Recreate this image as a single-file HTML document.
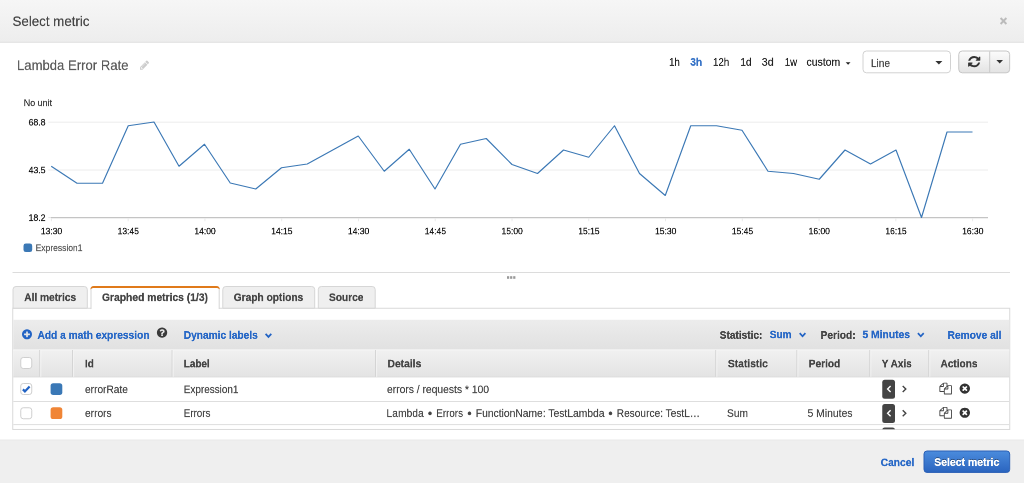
<!DOCTYPE html>
<html lang="en">
<head>
<meta charset="utf-8">
<title>Select metric</title>
<style>
html,body{margin:0;padding:0;}
body{width:1024px;height:483px;overflow:hidden;background:#fff;position:relative;font-family:"Liberation Sans", Arial, Helvetica, sans-serif;}
.a{position:absolute;box-sizing:border-box;}
.t{position:absolute;left:0;top:0;white-space:pre;line-height:32px;height:32px;will-change:transform;transform-origin:0 0;}
svg{position:absolute;left:0;top:0;overflow:visible;}
</style>
</head>
<body>
<svg width="1024" height="483" viewBox="0 0 1024 483">
  <defs>
    <linearGradient id="gHead" x1="0" y1="0" x2="0" y2="1"><stop offset="0" stop-color="#f6f6f6"/><stop offset="1" stop-color="#ededed"/></linearGradient>
    <linearGradient id="gBtn" x1="0" y1="0" x2="0" y2="1"><stop offset="0" stop-color="#fcfcfc"/><stop offset="1" stop-color="#e3e3e3"/></linearGradient>
    <linearGradient id="gTool" x1="0" y1="0" x2="0" y2="1"><stop offset="0" stop-color="#ececec"/><stop offset="1" stop-color="#e1e1e1"/></linearGradient>
    <linearGradient id="gTh" x1="0" y1="0" x2="0" y2="1"><stop offset="0" stop-color="#f1f1f1"/><stop offset="1" stop-color="#e3e3e3"/></linearGradient>
    <linearGradient id="gBlue" x1="0" y1="0" x2="0" y2="1"><stop offset="0" stop-color="#4b8cdd"/><stop offset="1" stop-color="#2a64bf"/></linearGradient>
    <clipPath id="cBox"><rect x="13" y="308.5" width="996.5" height="120.7"/></clipPath>
  </defs>

  <!-- modal header -->
  <rect x="0" y="0" width="1024" height="42" fill="url(#gHead)"/>
  <rect x="0" y="41.8" width="1024" height="1" fill="#e0e0e0"/>
  <!-- modal footer -->
  <rect x="0" y="439.8" width="1024" height="44" fill="#efefef"/>
  <rect x="0" y="439.6" width="1024" height="1" fill="#e9e9e9"/>

  <!-- chart type select -->
  <rect x="863" y="51" width="87.5" height="21.8" rx="3.5" fill="#fff" stroke="#d2d2d2" stroke-width="1"/>
  <!-- refresh button group -->
  <rect x="958.75" y="51" width="50.9" height="21.8" rx="3.5" fill="url(#gBtn)" stroke="#c6c6c6" stroke-width="1"/>
  <line x1="989.7" y1="51.3" x2="989.7" y2="72.5" stroke="#c9c9c9" stroke-width="1"/>

  <!-- chart -->
  <line x1="48.3" y1="122.2" x2="988" y2="122.2" stroke="#ececec" stroke-width="1"/>
  <line x1="48.3" y1="170" x2="988" y2="170" stroke="#ececec" stroke-width="1"/>
  <line x1="48.3" y1="217.6" x2="51" y2="217.6" stroke="#e4e4e4" stroke-width="1"/>
  <line x1="51" y1="217.6" x2="988" y2="217.6" stroke="#c4c4c4" stroke-width="1.1"/>
  <line x1="51.40" y1="218" x2="51.40" y2="221.3" stroke="#eaeaea" stroke-width="1"/><line x1="128.17" y1="218" x2="128.17" y2="221.3" stroke="#eaeaea" stroke-width="1"/><line x1="204.93" y1="218" x2="204.93" y2="221.3" stroke="#eaeaea" stroke-width="1"/><line x1="281.70" y1="218" x2="281.70" y2="221.3" stroke="#eaeaea" stroke-width="1"/><line x1="358.47" y1="218" x2="358.47" y2="221.3" stroke="#eaeaea" stroke-width="1"/><line x1="435.23" y1="218" x2="435.23" y2="221.3" stroke="#eaeaea" stroke-width="1"/><line x1="512.00" y1="218" x2="512.00" y2="221.3" stroke="#eaeaea" stroke-width="1"/><line x1="588.77" y1="218" x2="588.77" y2="221.3" stroke="#eaeaea" stroke-width="1"/><line x1="665.53" y1="218" x2="665.53" y2="221.3" stroke="#eaeaea" stroke-width="1"/><line x1="742.30" y1="218" x2="742.30" y2="221.3" stroke="#eaeaea" stroke-width="1"/><line x1="819.07" y1="218" x2="819.07" y2="221.3" stroke="#eaeaea" stroke-width="1"/><line x1="895.83" y1="218" x2="895.83" y2="221.3" stroke="#eaeaea" stroke-width="1"/><line x1="972.60" y1="218" x2="972.60" y2="221.3" stroke="#eaeaea" stroke-width="1"/>
  <polyline points="51.25,166.25 77.00,183.25 102.50,183.25 128.25,125.75 154.00,122.00 179.00,166.25 204.50,144.25 230.25,183.00 255.75,189.00 281.50,167.75 307.25,164.00 358.25,136.00 384.25,171.25 409.25,149.25 435.00,189.00 460.50,144.25 486.25,138.50 512.00,164.50 537.50,173.50 563.50,150.00 588.75,157.25 614.50,125.75 639.50,173.50 665.25,195.50 690.75,125.75 716.50,125.75 742.00,130.25 768.00,171.25 793.50,173.50 819.25,179.25 845.00,150.00 870.50,164.00 896.00,150.00 921.50,217.50 947.00,132.00 972.50,132.00" fill="none" stroke="#3b78b5" stroke-width="1.15" stroke-linejoin="round"/>
  <rect x="23.5" y="243.4" width="8.7" height="8.7" rx="2.3" fill="#3b78b5"/>

  <!-- splitter -->
  <rect x="12.5" y="272" width="997.5" height="1" fill="#dcdcdc"/>
  <rect x="507" y="276.2" width="2.2" height="2.6" fill="#999"/><rect x="510.1" y="276.2" width="2.2" height="2.6" fill="#999"/><rect x="513.2" y="276.2" width="2.2" height="2.6" fill="#999"/>

  <!-- tab panel -->
  <rect x="12.75" y="308.25" width="997" height="121.2" fill="#fff" stroke="#d9d9d9" stroke-width="1"/>
  <!-- tabs -->
  <path d="M13 308.2V289.5a3 3 0 0 1 3-3H84.3a3 3 0 0 1 3 3V308.2z" fill="#efefef" stroke="#d6d6d6" stroke-width="1"/>
  <path d="M222.8 308.2V289.5a3 3 0 0 1 3-3H311.7a3 3 0 0 1 3 3V308.2z" fill="#efefef" stroke="#d6d6d6" stroke-width="1"/>
  <path d="M318.3 308.2V289.5a3 3 0 0 1 3-3H372.2a3 3 0 0 1 3 3V308.2z" fill="#efefef" stroke="#d6d6d6" stroke-width="1"/>
  <path d="M91 309V289.5a3 3 0 0 1 3-3H216.2a3 3 0 0 1 3 3V309z" fill="#fff"/>
  <path d="M91 309V289.5a3 3 0 0 1 3-3H216.2a3 3 0 0 1 3 3V309" fill="none" stroke="#d6d6d6" stroke-width="1"/>
  <path d="M90.5 289.6a3.4 3.4 0 0 1 3.4-3.6H216.3a3.4 3.4 0 0 1 3.4 3.6 3 3 0 0 0-3-1.6H93.5a3 3 0 0 0-3 1.6z" fill="#e07a1a"/>

  <!-- toolbar + table header -->
  <rect x="13.25" y="319.8" width="996" height="30" fill="url(#gTool)"/>
  <rect x="13.25" y="349.7" width="996" height="27.3" fill="url(#gTh)"/>
  <rect x="13.25" y="349.6" width="996" height="0.8" fill="#f7f7f7"/>
  <rect x="13.25" y="376.6" width="996" height="0.8" fill="#dadada"/>
  <rect x="13.25" y="401" width="996" height="1" fill="#dedede"/>
  <rect x="13.25" y="424.1" width="996" height="1" fill="#dedede"/>
  <g>
    <rect x="39.25" y="350" width="1" height="26.8" fill="#d2d2d2"/><rect x="40.25" y="350" width="1" height="26.8" fill="#f6f6f6" opacity=".8"/><rect x="72.10" y="350" width="1" height="26.8" fill="#d2d2d2"/><rect x="73.10" y="350" width="1" height="26.8" fill="#f6f6f6" opacity=".8"/><rect x="171.60" y="350" width="1" height="26.8" fill="#d2d2d2"/><rect x="172.60" y="350" width="1" height="26.8" fill="#f6f6f6" opacity=".8"/><rect x="375.10" y="350" width="1" height="26.8" fill="#d2d2d2"/><rect x="376.10" y="350" width="1" height="26.8" fill="#f6f6f6" opacity=".8"/><rect x="715.30" y="350" width="1" height="26.8" fill="#d2d2d2"/><rect x="716.30" y="350" width="1" height="26.8" fill="#f6f6f6" opacity=".8"/><rect x="796.40" y="350" width="1" height="26.8" fill="#d2d2d2"/><rect x="797.40" y="350" width="1" height="26.8" fill="#f6f6f6" opacity=".8"/><rect x="869.30" y="350" width="1" height="26.8" fill="#d2d2d2"/><rect x="870.30" y="350" width="1" height="26.8" fill="#f6f6f6" opacity=".8"/><rect x="928.30" y="350" width="1" height="26.8" fill="#d2d2d2"/><rect x="929.30" y="350" width="1" height="26.8" fill="#f6f6f6" opacity=".8"/>
  </g>

  <!-- primary button -->
  <rect x="924" y="451" width="85.7" height="21.4" rx="3" fill="url(#gBlue)" stroke="#2b60b6" stroke-width="1"/>

  <g clip-path="url(#cBox)">
<rect x="20.75" y="383.50" width="11" height="11" rx="2.5" fill="#fff" stroke="#cfcfcf" stroke-width="1"/><path d="M22.9 389.40 L24.9 391.40 L29.6 386.40" stroke="#2263c4" stroke-width="2.2" fill="none" stroke-linejoin="miter"/>
<rect x="20.75" y="407.75" width="11" height="11" rx="2.5" fill="#fff" stroke="#cfcfcf" stroke-width="1"/>
<rect x="50.6" y="383.2" width="11.7" height="11.7" rx="2.6" fill="#3a78b6"/>
<rect x="50.6" y="407.3" width="11.7" height="11.7" rx="2.6" fill="#f08536"/>
<rect x="882.25" y="379.75" width="12.75" height="19" rx="2.5" fill="#444"/>
<path d="M890.6 385.95 L887.6 388.95 L890.6 391.95" stroke="#fff" stroke-width="1.4" fill="none"/>
<path d="M902.7 385.95 L905.8 388.95 L902.7 391.95" stroke="#444" stroke-width="1.4" fill="none"/>
<path transform="translate(939.400 382.750) scale(0.00698 0.00653) translate(0 0)" fill="#444" d="M1696 384q40 0 68 28t28 68v1216q0 40-28 68t-68 28h-960q-40 0-68-28t-28-68v-288h-544q-40 0-68-28t-28-68v-672q0-40 20-88t48-76l408-408q28-28 76-48t88-20h416q40 0 68 28t28 68v328q68-40 128-40h416zm-544 213l-299 299h299v-299zm-640-384l-299 299h299v-299zm196 647l316-316v-416h-384v416q0 40-28 68t-68 28h-416v640h512v-256q0-40 20-88t48-76zm956 804v-1152h-384v416q0 40-28 68t-68 28h-416v640h896z"/>
<path transform="translate(959.600 383.450) scale(0.00677 0.00664) translate(-128 -128)" fill="#333" d="M1277 1122q0-26-19-45l-181-181 181-181q19-19 19-45 0-27-19-46l-90-90q-19-19-46-19-26 0-45 19l-181 181-181-181q-19-19-45-19-27 0-46 19l-90 90q-19 19-19 46 0 26 19 45l181 181-181 181q-19 19-19 45 0 27 19 46l90 90q19 19 46 19 26 0 45-19l181-181 181 181q19 19 45 19 27 0 46-19l90-90q19-19 19-46zm387-226q0 209-103 385.500t-279.500 279.500-385.500 103-385.500-103-279.500-279.500-103-385.500 103-385.500 279.500-279.500 385.500-103 385.500 103 279.500 279.500 103 385.500z"/>
<rect x="882.25" y="403.95" width="12.75" height="19" rx="2.5" fill="#444"/>
<path d="M890.6 410.15 L887.6 413.15 L890.6 416.15" stroke="#fff" stroke-width="1.4" fill="none"/>
<path d="M902.7 410.15 L905.8 413.15 L902.7 416.15" stroke="#444" stroke-width="1.4" fill="none"/>
<path transform="translate(939.400 406.950) scale(0.00698 0.00653) translate(0 0)" fill="#444" d="M1696 384q40 0 68 28t28 68v1216q0 40-28 68t-68 28h-960q-40 0-68-28t-28-68v-288h-544q-40 0-68-28t-28-68v-672q0-40 20-88t48-76l408-408q28-28 76-48t88-20h416q40 0 68 28t28 68v328q68-40 128-40h416zm-544 213l-299 299h299v-299zm-640-384l-299 299h299v-299zm196 647l316-316v-416h-384v416q0 40-28 68t-68 28h-416v640h512v-256q0-40 20-88t48-76zm956 804v-1152h-384v416q0 40-28 68t-68 28h-416v640h896z"/>
<path transform="translate(959.600 407.650) scale(0.00677 0.00664) translate(-128 -128)" fill="#333" d="M1277 1122q0-26-19-45l-181-181 181-181q19-19 19-45 0-27-19-46l-90-90q-19-19-46-19-26 0-45 19l-181 181-181-181q-19-19-45-19-27 0-46 19l-90 90q-19 19-19 46 0 26 19 45l181 181-181 181q-19 19-19 45 0 27 19 46l90 90q19 19 46 19 26 0 45-19l181-181 181 181q19 19 45 19 27 0 46-19l90-90q19-19 19-46zm387-226q0 209-103 385.500t-279.500 279.500-385.500 103-385.500-103-279.500-279.500-103-385.500 103-385.500 279.500-279.500 385.500-103 385.500 103 279.500 279.500 103 385.500z"/>
<rect x="882.25" y="427.40" width="12.75" height="19" rx="2.5" fill="#444"/>
<path d="M890.6 433.60 L887.6 436.60 L890.6 439.60" stroke="#fff" stroke-width="1.4" fill="none"/>
<path d="M902.7 433.60 L905.8 436.60 L902.7 439.60" stroke="#444" stroke-width="1.4" fill="none"/>
<path transform="translate(939.400 430.400) scale(0.00698 0.00653) translate(0 0)" fill="#444" d="M1696 384q40 0 68 28t28 68v1216q0 40-28 68t-68 28h-960q-40 0-68-28t-28-68v-288h-544q-40 0-68-28t-28-68v-672q0-40 20-88t48-76l408-408q28-28 76-48t88-20h416q40 0 68 28t28 68v328q68-40 128-40h416zm-544 213l-299 299h299v-299zm-640-384l-299 299h299v-299zm196 647l316-316v-416h-384v416q0 40-28 68t-68 28h-416v640h512v-256q0-40 20-88t48-76zm956 804v-1152h-384v416q0 40-28 68t-68 28h-416v640h896z"/>
<path transform="translate(959.600 431.100) scale(0.00677 0.00664) translate(-128 -128)" fill="#333" d="M1277 1122q0-26-19-45l-181-181 181-181q19-19 19-45 0-27-19-46l-90-90q-19-19-46-19-26 0-45 19l-181 181-181-181q-19-19-45-19-27 0-46 19l-90 90q-19 19-19 46 0 26 19 45l181 181-181 181q-19 19-19 45 0 27 19 46l90 90q19 19 46 19 26 0 45-19l181-181 181 181q19 19 45 19 27 0 46-19l90-90q19-19 19-46zm387-226q0 209-103 385.500t-279.500 279.500-385.500 103-385.500-103-279.500-279.500-103-385.500 103-385.500 279.500-279.500 385.500-103 385.500 103 279.500 279.500 103 385.500z"/>
  </g>
<path d="M1000.6 18 L1006.4 24 M1006.4 18 L1000.6 24" stroke="#bbb" stroke-width="1.9" fill="none"/>
<path transform="translate(140.000 60.600) scale(0.00594 0.00603) translate(-128 -154)" fill="#ccc" d="M491 1536l91-91-235-235-91 91v107h128v128h107zm523-928q0-22-22-22-10 0-17 7l-542 542q-7 7-7 17 0 22 22 22 10 0 17-7l542-542q7-7 7-17zm-54-192l416 416-832 832h-416v-416zm683 96q0 53-37 90l-166 166-416-416 166-165q36-38 90-38 53 0 91 38l235 234q37 39 37 91z"/>
<path d="M845.7 62.2h4.8l-2.4 2.5z" fill="#222"/>
<path d="M935.4 60.9h7l-3.5 3.6z" fill="#333"/>
<path d="M996.4 60h6.6l-3.3 3.4z" fill="#333"/>
<path transform="translate(968.100 56.100) scale(0.00794 0.00723) translate(-128 -128)" fill="#333" d="M1639 1056q0 5-1 7-64 268-268 434.500t-478 166.500q-146 0-282.500-55t-243.500-157l-129 129q-19 19-45 19t-45-19-19-45v-448q0-26 19-45t45-19h448q26 0 45 19t19 45-19 45l-137 137q71 66 161 102t187 36q134 0 250-65t186-179q11-17 53-117 8-23 30-23h192q13 0 22.500 9.500t9.500 22.500zm25-800v448q0 26-19 45t-45 19h-448q-26 0-45-19t-19-45 19-45l138-138q-148-137-349-137-134 0-250 65t-186 179q-11 17-53 117-8 23-30 23h-199q-13 0-22.500-9.500t-9.500-22.500v-7q65-268 270-434.500t480-166.500q146 0 284 55.500t245 156.500l130-129q19-19 45-19t45 19 19 45z"/>
<path transform="translate(22.000 329.300) scale(0.00651 0.00651) translate(-128 -128)" fill="#2263c4" d="M1344 960v-128q0-26-19-45t-45-19h-256v-256q0-26-19-45t-45-19h-128q-26 0-45 19t-19 45v256h-256q-26 0-45 19t-19 45v128q0 26 19 45t45 19h256v256q0 26 19 45t45 19h128q26 0 45-19t19-45v-256h256q26 0 45-19t19-45zm320-64q0 209-103 385.500t-279.500 279.500-385.500 103-385.500-103-279.500-279.500-103-385.500 103-385.500 279.500-279.500 385.500-103 385.500 103 279.500 279.500 103 385.500z"/>
<path transform="translate(156.900 327.500) scale(0.00671 0.00671) translate(-128 -128)" fill="#3a3a3a" d="M1024 1376v-192q0-14-9-23t-23-9h-192q-14 0-23 9t-9 23v192q0 14 9 23t23 9h192q14 0 23-9t9-23zm256-672q0-88-55.500-163t-138.500-116-170-41q-243 0-371 213-15 24 8 42l132 100q7 6 19 6 16 0 25-12 53-68 86-92 34-24 86-24 48 0 85.500 26t37.500 59q0 38-20 61t-68 45q-63 28-115.500 86.500t-52.500 125.500v36q0 14 9 23t23 9h192q14 0 23-9t9-23q0-19 21.500-49.500t54.500-49.500q32-18 49-28.500t46-35 44.500-48 28-60.500 12.500-81zm384 192q0 209-103 385.500t-279.500 279.500-385.500 103-385.500-103-279.500-279.500-103-385.500 103-385.500 279.500-279.500 385.500-103 385.500 103 279.500 279.500 103 385.500z"/>
<path d="M265.60 333.80 L268.45 336.90 L271.30 333.80" stroke="#2263c4" stroke-width="1.7" fill="none" stroke-linejoin="miter"/>
<path d="M799.70 333.20 L802.55 336.30 L805.40 333.20" stroke="#2263c4" stroke-width="1.7" fill="none" stroke-linejoin="miter"/>
<path d="M917.90 333.20 L920.80 336.30 L923.70 333.20" stroke="#2263c4" stroke-width="1.7" fill="none" stroke-linejoin="miter"/>
<rect x="20.75" y="357.50" width="11" height="11" rx="2.5" fill="#fff" stroke="#cfcfcf" stroke-width="1"/>
</svg>
<div class="t" style="transform:translate(12.50px,13.50px) rotate(0.001deg) scale(0.4758,0.5);font-size:28px;font-weight:400;color:#444;-webkit-text-stroke:0.40px #444;">Select metric</div>
<div class="t" style="transform:translate(17.00px,57.50px) rotate(0.001deg) scale(0.4683,0.5);font-size:28px;font-weight:400;color:#5a5a5a;-webkit-text-stroke:0.40px #5a5a5a;">Lambda Error Rate</div>
<div class="t" style="transform:translate(669.10px,54.20px) rotate(0.001deg) scale(0.4411,0.5);font-size:22px;font-weight:400;color:#222;-webkit-text-stroke:0.34px #222;">1h</div>
<div class="t" style="transform:translate(690.30px,54.20px) rotate(0.001deg) scale(0.4594,0.5);font-size:22px;font-weight:700;color:#3572c6;-webkit-text-stroke:0.50px #3572c6;">3h</div>
<div class="t" style="transform:translate(713.00px,54.20px) rotate(0.001deg) scale(0.4412,0.5);font-size:22px;font-weight:400;color:#222;-webkit-text-stroke:0.34px #222;">12h</div>
<div class="t" style="transform:translate(740.40px,54.20px) rotate(0.001deg) scale(0.4534,0.5);font-size:22px;font-weight:400;color:#222;-webkit-text-stroke:0.34px #222;">1d</div>
<div class="t" style="transform:translate(761.70px,54.20px) rotate(0.001deg) scale(0.4901,0.5);font-size:22px;font-weight:400;color:#222;-webkit-text-stroke:0.34px #222;">3d</div>
<div class="t" style="transform:translate(784.75px,54.20px) rotate(0.001deg) scale(0.4391,0.5);font-size:22px;font-weight:400;color:#222;-webkit-text-stroke:0.34px #222;">1w</div>
<div class="t" style="transform:translate(806.50px,54.20px) rotate(0.001deg) scale(0.4759,0.5);font-size:22px;font-weight:400;color:#222;-webkit-text-stroke:0.34px #222;">custom</div>
<div class="t" style="transform:translate(870.90px,55.40px) rotate(0.001deg) scale(0.4616,0.5);font-size:22px;font-weight:400;color:#444;-webkit-text-stroke:0.34px #444;">Line</div>
<div class="t" style="transform:translate(23.75px,95.00px) rotate(0.001deg) scale(0.4952,0.5);font-size:18px;font-weight:400;color:#333;-webkit-text-stroke:0.40px #333;">No unit</div>
<div class="t" style="transform:translate(28.60px,114.50px) rotate(0.001deg) scale(0.4822,0.5);font-size:18px;font-weight:400;color:#111;-webkit-text-stroke:0.40px #111;">68.8</div>
<div class="t" style="transform:translate(28.60px,162.30px) rotate(0.001deg) scale(0.4822,0.5);font-size:18px;font-weight:400;color:#111;-webkit-text-stroke:0.40px #111;">43.5</div>
<div class="t" style="transform:translate(28.60px,209.90px) rotate(0.001deg) scale(0.4822,0.5);font-size:18px;font-weight:400;color:#111;-webkit-text-stroke:0.40px #111;">18.2</div>
<div class="t" style="transform:translate(40.85px,223.30px) rotate(0.001deg) scale(0.4728,0.5);font-size:18px;font-weight:400;color:#111;-webkit-text-stroke:0.40px #111;">13:30</div>
<div class="t" style="transform:translate(117.62px,223.30px) rotate(0.001deg) scale(0.4728,0.5);font-size:18px;font-weight:400;color:#111;-webkit-text-stroke:0.40px #111;">13:45</div>
<div class="t" style="transform:translate(194.40px,223.30px) rotate(0.001deg) scale(0.4728,0.5);font-size:18px;font-weight:400;color:#111;-webkit-text-stroke:0.40px #111;">14:00</div>
<div class="t" style="transform:translate(271.17px,223.30px) rotate(0.001deg) scale(0.4728,0.5);font-size:18px;font-weight:400;color:#111;-webkit-text-stroke:0.40px #111;">14:15</div>
<div class="t" style="transform:translate(347.95px,223.30px) rotate(0.001deg) scale(0.4728,0.5);font-size:18px;font-weight:400;color:#111;-webkit-text-stroke:0.40px #111;">14:30</div>
<div class="t" style="transform:translate(424.73px,223.30px) rotate(0.001deg) scale(0.4728,0.5);font-size:18px;font-weight:400;color:#111;-webkit-text-stroke:0.40px #111;">14:45</div>
<div class="t" style="transform:translate(501.50px,223.30px) rotate(0.001deg) scale(0.4728,0.5);font-size:18px;font-weight:400;color:#111;-webkit-text-stroke:0.40px #111;">15:00</div>
<div class="t" style="transform:translate(578.27px,223.30px) rotate(0.001deg) scale(0.4728,0.5);font-size:18px;font-weight:400;color:#111;-webkit-text-stroke:0.40px #111;">15:15</div>
<div class="t" style="transform:translate(655.05px,223.30px) rotate(0.001deg) scale(0.4728,0.5);font-size:18px;font-weight:400;color:#111;-webkit-text-stroke:0.40px #111;">15:30</div>
<div class="t" style="transform:translate(731.82px,223.30px) rotate(0.001deg) scale(0.4728,0.5);font-size:18px;font-weight:400;color:#111;-webkit-text-stroke:0.40px #111;">15:45</div>
<div class="t" style="transform:translate(808.60px,223.30px) rotate(0.001deg) scale(0.4728,0.5);font-size:18px;font-weight:400;color:#111;-webkit-text-stroke:0.40px #111;">16:00</div>
<div class="t" style="transform:translate(885.38px,223.30px) rotate(0.001deg) scale(0.4728,0.5);font-size:18px;font-weight:400;color:#111;-webkit-text-stroke:0.40px #111;">16:15</div>
<div class="t" style="transform:translate(962.15px,223.30px) rotate(0.001deg) scale(0.4728,0.5);font-size:18px;font-weight:400;color:#111;-webkit-text-stroke:0.40px #111;">16:30</div>
<div class="t" style="transform:translate(35.60px,240.00px) rotate(0.001deg) scale(0.4734,0.5);font-size:18px;font-weight:400;color:#555;-webkit-text-stroke:0.40px #555;">Expression1</div>
<div class="t" style="transform:translate(24.25px,289.50px) rotate(0.001deg) scale(0.4613,0.5);font-size:22px;font-weight:700;color:#444;-webkit-text-stroke:0.50px #444;">All metrics</div>
<div class="t" style="transform:translate(102.00px,289.50px) rotate(0.001deg) scale(0.4686,0.5);font-size:22px;font-weight:700;color:#444;-webkit-text-stroke:0.50px #444;">Graphed metrics (1/3)</div>
<div class="t" style="transform:translate(233.75px,289.50px) rotate(0.001deg) scale(0.4623,0.5);font-size:22px;font-weight:700;color:#444;-webkit-text-stroke:0.50px #444;">Graph options</div>
<div class="t" style="transform:translate(329.00px,289.50px) rotate(0.001deg) scale(0.4625,0.5);font-size:22px;font-weight:700;color:#444;-webkit-text-stroke:0.50px #444;">Source</div>
<div class="t" style="transform:translate(37.50px,327.25px) rotate(0.001deg) scale(0.4627,0.5);font-size:22px;font-weight:700;color:#2667c6;-webkit-text-stroke:0.50px #2667c6;">Add a math expression</div>
<div class="t" style="transform:translate(183.75px,327.25px) rotate(0.001deg) scale(0.4620,0.5);font-size:22px;font-weight:700;color:#2667c6;-webkit-text-stroke:0.50px #2667c6;">Dynamic labels</div>
<div class="t" style="transform:translate(719.75px,327.25px) rotate(0.001deg) scale(0.4590,0.5);font-size:22px;font-weight:700;color:#444;-webkit-text-stroke:0.50px #444;">Statistic:</div>
<div class="t" style="transform:translate(769.75px,326.70px) rotate(0.001deg) scale(0.4582,0.5);font-size:22px;font-weight:700;color:#2667c6;-webkit-text-stroke:0.50px #2667c6;">Sum</div>
<div class="t" style="transform:translate(820.60px,327.25px) rotate(0.001deg) scale(0.4618,0.5);font-size:22px;font-weight:700;color:#444;-webkit-text-stroke:0.50px #444;">Period:</div>
<div class="t" style="transform:translate(862.50px,326.70px) rotate(0.001deg) scale(0.4681,0.5);font-size:22px;font-weight:700;color:#2667c6;-webkit-text-stroke:0.50px #2667c6;">5 Minutes</div>
<div class="t" style="transform:translate(947.50px,327.25px) rotate(0.001deg) scale(0.4648,0.5);font-size:22px;font-weight:700;color:#2667c6;-webkit-text-stroke:0.50px #2667c6;">Remove all</div>
<div class="t" style="transform:translate(85.00px,355.85px) rotate(0.001deg) scale(0.4601,0.5);font-size:22px;font-weight:700;color:#444;-webkit-text-stroke:0.50px #444;">Id</div>
<div class="t" style="transform:translate(183.75px,355.85px) rotate(0.001deg) scale(0.4524,0.5);font-size:22px;font-weight:700;color:#444;-webkit-text-stroke:0.50px #444;">Label</div>
<div class="t" style="transform:translate(387.50px,355.85px) rotate(0.001deg) scale(0.4677,0.5);font-size:22px;font-weight:700;color:#444;-webkit-text-stroke:0.50px #444;">Details</div>
<div class="t" style="transform:translate(727.90px,355.85px) rotate(0.001deg) scale(0.4673,0.5);font-size:22px;font-weight:700;color:#444;-webkit-text-stroke:0.50px #444;">Statistic</div>
<div class="t" style="transform:translate(808.75px,355.85px) rotate(0.001deg) scale(0.4601,0.5);font-size:22px;font-weight:700;color:#444;-webkit-text-stroke:0.50px #444;">Period</div>
<div class="t" style="transform:translate(881.75px,355.85px) rotate(0.001deg) scale(0.4542,0.5);font-size:22px;font-weight:700;color:#444;-webkit-text-stroke:0.50px #444;">Y Axis</div>
<div class="t" style="transform:translate(940.50px,355.85px) rotate(0.001deg) scale(0.4586,0.5);font-size:22px;font-weight:700;color:#444;-webkit-text-stroke:0.50px #444;">Actions</div>
<div class="t" style="transform:translate(85.00px,381.60px) rotate(0.001deg) scale(0.4617,0.5);font-size:22px;font-weight:400;color:#444;-webkit-text-stroke:0.34px #444;">errorRate</div>
<div class="t" style="transform:translate(183.75px,381.60px) rotate(0.001deg) scale(0.4522,0.5);font-size:22px;font-weight:400;color:#444;-webkit-text-stroke:0.34px #444;">Expression1</div>
<div class="t" style="transform:translate(387.00px,381.60px) rotate(0.001deg) scale(0.4686,0.5);font-size:22px;font-weight:400;color:#444;-webkit-text-stroke:0.34px #444;">errors / requests * 100</div>
<div class="t" style="transform:translate(85.00px,405.40px) rotate(0.001deg) scale(0.4630,0.5);font-size:22px;font-weight:400;color:#444;-webkit-text-stroke:0.34px #444;">errors</div>
<div class="t" style="transform:translate(183.75px,405.40px) rotate(0.001deg) scale(0.4450,0.5);font-size:22px;font-weight:400;color:#444;-webkit-text-stroke:0.34px #444;">Errors</div>
<div class="t" style="transform:translate(386.50px,405.40px) rotate(0.001deg) scale(0.4685,0.5);font-size:22px;font-weight:400;color:#444;-webkit-text-stroke:0.34px #444;">Lambda</div>
<div class="t" style="transform:translate(436.25px,405.40px) rotate(0.001deg) scale(0.4466,0.5);font-size:22px;font-weight:400;color:#444;-webkit-text-stroke:0.34px #444;">Errors</div>
<div class="t" style="transform:translate(475.75px,405.40px) rotate(0.001deg) scale(0.4686,0.5);font-size:22px;font-weight:400;color:#444;-webkit-text-stroke:0.34px #444;">FunctionName: TestLambda</div>
<div class="t" style="transform:translate(616.75px,405.40px) rotate(0.001deg) scale(0.4610,0.5);font-size:22px;font-weight:400;color:#444;-webkit-text-stroke:0.34px #444;">Resource: TestL…</div>
<div class="t" style="transform:translate(428.07px,405.40px) rotate(0.001deg) scale(0.5000,0.5);font-size:22px;font-weight:400;color:#444;-webkit-text-stroke:1.20px #444;">•</div>
<div class="t" style="transform:translate(467.57px,405.40px) rotate(0.001deg) scale(0.5000,0.5);font-size:22px;font-weight:400;color:#444;-webkit-text-stroke:1.20px #444;">•</div>
<div class="t" style="transform:translate(608.57px,405.40px) rotate(0.001deg) scale(0.5000,0.5);font-size:22px;font-weight:400;color:#444;-webkit-text-stroke:1.20px #444;">•</div>
<div class="t" style="transform:translate(727.00px,405.40px) rotate(0.001deg) scale(0.4641,0.5);font-size:22px;font-weight:400;color:#444;-webkit-text-stroke:0.34px #444;">Sum</div>
<div class="t" style="transform:translate(807.50px,405.40px) rotate(0.001deg) scale(0.4717,0.5);font-size:22px;font-weight:400;color:#444;-webkit-text-stroke:0.34px #444;">5 Minutes</div>
<div class="t" style="transform:translate(880.70px,454.60px) rotate(0.001deg) scale(0.4657,0.5);font-size:22px;font-weight:700;color:#2667c6;-webkit-text-stroke:0.50px #2667c6;">Cancel</div>
<div class="t" style="transform:translate(934.20px,454.30px) rotate(0.001deg) scale(0.4753,0.5);font-size:22px;font-weight:700;color:#fff;-webkit-text-stroke:0.50px #fff;text-shadow:0 -2px 0 rgba(0,0,0,.4);">Select metric</div>
</body>
</html>
